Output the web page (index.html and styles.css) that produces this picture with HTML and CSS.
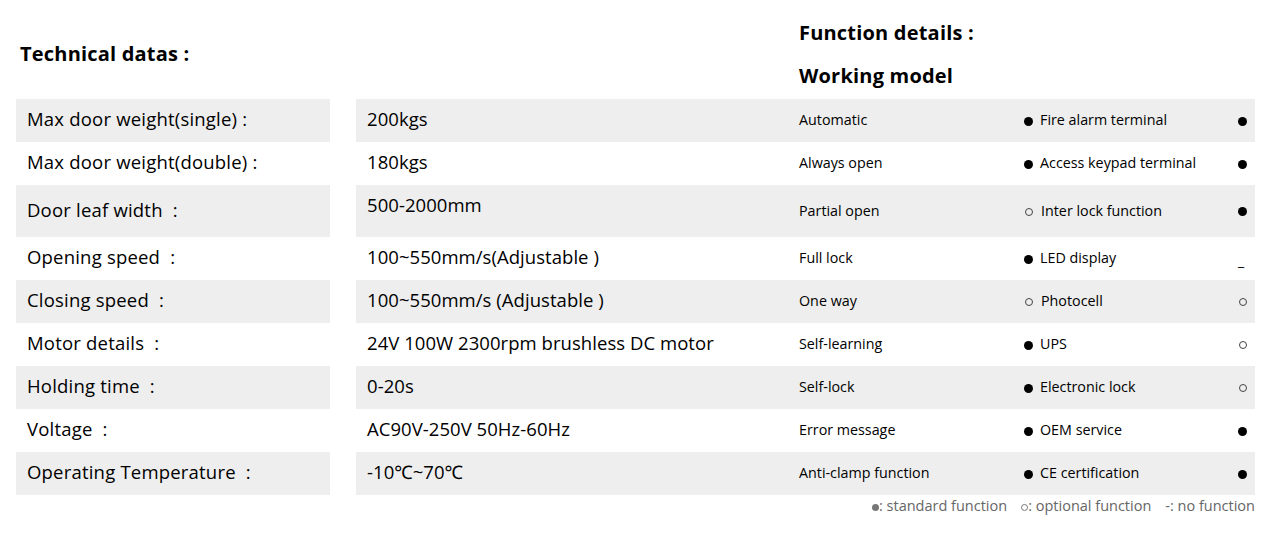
FILE: index.html
```html
<!DOCTYPE html>
<html>
<head>
<meta charset="utf-8">
<link rel="stylesheet" href="styles.css">
</head>
<body>
<div class="page">
  <div class="head">
    <div class="head-left"><h2 class="title">Technical datas :</h2></div>
    <div class="head-right">
      <h2 class="title">Function details :</h2>
      <h2 class="title">Working model</h2>
    </div>
  </div>
  <div class="rows">
    <div class="row shade">
      <div class="label">Max door weight(single) :</div>
      <div class="rest">
        <div class="value">200kgs</div>
        <div class="func">Automatic</div>
        <div class="feat"><span class="dot"></span>Fire alarm terminal</div>
        <div class="mark"><span class="dot"></span></div>
      </div>
    </div>
    <div class="row">
      <div class="label">Max door weight(double) :</div>
      <div class="rest">
        <div class="value">180kgs</div>
        <div class="func">Always open</div>
        <div class="feat"><span class="dot"></span>Access keypad terminal</div>
        <div class="mark"><span class="dot"></span></div>
      </div>
    </div>
    <div class="row shade tall">
      <div class="label">Door leaf width &nbsp;:</div>
      <div class="rest">
        <div class="value top">500-2000mm</div>
        <div class="func">Partial open</div>
        <div class="feat"><span class="ring"></span>Inter lock function</div>
        <div class="mark"><span class="dot"></span></div>
      </div>
    </div>
    <div class="row">
      <div class="label">Opening speed &nbsp;:</div>
      <div class="rest">
        <div class="value">100~550mm/s(Adjustable )</div>
        <div class="func">Full lock</div>
        <div class="feat"><span class="dot"></span>LED display</div>
        <div class="mark"><span class="dash">_</span></div>
      </div>
    </div>
    <div class="row shade">
      <div class="label">Closing speed &nbsp;:</div>
      <div class="rest">
        <div class="value">100~550mm/s (Adjustable )</div>
        <div class="func">One way</div>
        <div class="feat"><span class="ring"></span>Photocell</div>
        <div class="mark"><span class="ring"></span></div>
      </div>
    </div>
    <div class="row">
      <div class="label">Motor details &nbsp;:</div>
      <div class="rest">
        <div class="value">24V 100W 2300rpm brushless DC motor</div>
        <div class="func">Self-learning</div>
        <div class="feat"><span class="dot"></span>UPS</div>
        <div class="mark"><span class="ring"></span></div>
      </div>
    </div>
    <div class="row shade">
      <div class="label">Holding time &nbsp;:</div>
      <div class="rest">
        <div class="value">0-20s</div>
        <div class="func">Self-lock</div>
        <div class="feat"><span class="dot"></span>Electronic lock</div>
        <div class="mark"><span class="ring"></span></div>
      </div>
    </div>
    <div class="row">
      <div class="label">Voltage &nbsp;:</div>
      <div class="rest">
        <div class="value">AC90V-250V 50Hz-60Hz</div>
        <div class="func">Error message</div>
        <div class="feat"><span class="dot"></span>OEM service</div>
        <div class="mark"><span class="dot"></span></div>
      </div>
    </div>
    <div class="row shade">
      <div class="label">Operating Temperature &nbsp;:</div>
      <div class="rest">
        <div class="value">-10℃~70℃</div>
        <div class="func">Anti-clamp function</div>
        <div class="feat"><span class="dot"></span>CE certification</div>
        <div class="mark"><span class="dot"></span></div>
      </div>
    </div>
  </div>
  <div class="legend">
    <span class="leg"><span class="ldot"></span>: standard function</span>
    <span class="leg"><span class="lring"></span>: optional function</span>
    <span class="leg">-: no function</span>
  </div>
</div>
</body>
</html>
```

FILE: styles.css
```css
html, body {
  margin: 0;
  padding: 0;
  background: #fff;
}
body {
  font-family: "Open Sans", "Noto Sans", sans-serif;
  color: #000;
}
.page {
  padding-left: 16px;
  width: 1239px;
}
.head {
  display: flex;
  height: 99px;
}
.head-left {
  width: 764px;
  box-sizing: border-box;
  padding-left: 4px;
  padding-top: 40px;
}
.head-right {
  display: flex;
  flex-direction: column;
  padding-left: 19px;
  padding-top: 19px;
  gap: 15px;
}
.title {
  margin: 0;
  font-size: 20px;
  font-weight: 700;
  line-height: 28px;
  letter-spacing: 0.2px;
}
.row {
  display: flex;
  height: 43px;
  gap: 26px;
}
.row.tall {
  height: 52px;
}
.label {
  width: 314px;
  box-sizing: border-box;
  padding-left: 11px;
  padding-bottom: 4px;
  font-size: 18.5px;
  letter-spacing: 0.2px;
  display: flex;
  align-items: center;
}
.rest {
  flex: 1;
  display: flex;
  align-items: center;
}
.shade .label,
.shade .rest {
  background: #eeeeee;
}
.value {
  width: 424px;
  box-sizing: border-box;
  padding-left: 11px;
  padding-bottom: 4px;
  font-size: 18.5px;
  letter-spacing: 0.05px;
}
.value.top {
  align-self: flex-start;
  line-height: 40px;
  padding-bottom: 0;
}
.func {
  width: 235px;
  box-sizing: border-box;
  padding-left: 19px;
  padding-bottom: 2px;
  font-size: 14.3px;
}
.feat {
  width: 210px;
  box-sizing: border-box;
  padding-left: 9px;
  padding-bottom: 2px;
  font-size: 14.3px;
  display: flex;
  align-items: center;
}
.mark {
  flex: 1;
  box-sizing: border-box;
  padding-left: 13px;
  display: flex;
  align-items: center;
  font-size: 14px;
}
.dot {
  display: inline-block;
  width: 9px;
  height: 9px;
  border-radius: 50%;
  background: #000;
  margin-right: 7px;
  margin-top: 3px;
}
.mark .dot {
  margin-top: 1px;
}
.ring {
  display: inline-block;
  width: 6px;
  height: 6px;
  border-radius: 50%;
  border: 1px solid #444;
  margin: 3px 8px 0 1px;
}
.mark .ring {
  margin-top: 1px;
}
.dash {
  display: inline-block;
  margin-top: 4px;
}
.legend {
  display: flex;
  justify-content: flex-end;
  gap: 14px;
  padding-top: 2px;
  font-size: 14.5px;
  color: #666;
  line-height: 18px;
}
.leg {
  display: flex;
  align-items: center;
}
.ldot {
  display: inline-block;
  width: 7px;
  height: 7px;
  border-radius: 50%;
  background: #777;
  margin-top: 2px;
}
.lring {
  display: inline-block;
  width: 5px;
  height: 5px;
  border-radius: 50%;
  border: 1px solid #777;
  margin-top: 2px;
}
```
